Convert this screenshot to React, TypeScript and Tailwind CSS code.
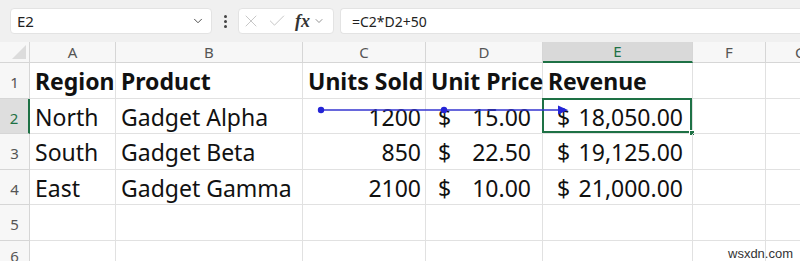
import React from "react";
import { X, Check, ChevronDown } from "lucide-react";

const FONT = { fontFamily: '"Noto Sans", "Liberation Sans", sans-serif' };

type Cell = { text?: string; bold?: boolean; align?: "left" | "right"; acct?: string };

const rows: Cell[][] = [
  [
    { text: "Region", bold: true },
    { text: "Product", bold: true },
    { text: "Units Sold", bold: true },
    { text: "Unit Price", bold: true },
    { text: "Revenue", bold: true },
    {},
    {},
  ],
  [
    { text: "North" },
    { text: "Gadget Alpha" },
    { text: "1200", align: "right" },
    { acct: "15.00" },
    { acct: "18,050.00" },
    {},
    {},
  ],
  [
    { text: "South" },
    { text: "Gadget Beta" },
    { text: "850", align: "right" },
    { acct: "22.50" },
    { acct: "19,125.00" },
    {},
    {},
  ],
  [
    { text: "East" },
    { text: "Gadget Gamma" },
    { text: "2100", align: "right" },
    { acct: "10.00" },
    { acct: "21,000.00" },
    {},
    {},
  ],
  [{}, {}, {}, {}, {}, {}, {}],
  [{}, {}, {}, {}, {}, {}, {}],
];

const cols = ["A", "B", "C", "D", "E", "F", "G"];

export default function App() {
  return (
    <div className="relative w-[800px] h-[261px] overflow-hidden bg-white text-[#111]" style={FONT}>
      {/* Formula bar */}
      <div className="h-[42px] bg-[#f0f0f0] flex items-center pl-[10px] gap-[6px]">
        <div className="w-[202px] h-[26px] bg-white rounded-[4px] border border-[#e3e3e3] flex items-center justify-between pl-[6px] pr-[6px]">
          <span className="text-[15px] text-[#222]">E2</span>
          <ChevronDown size={14} strokeWidth={1.6} className="text-[#444]" />
        </div>
        <div className="w-[14px] flex flex-col items-center gap-[2px]">
          <span className="w-[3px] h-[3px] rounded-full bg-[#444]" />
          <span className="w-[3px] h-[3px] rounded-full bg-[#444]" />
          <span className="w-[3px] h-[3px] rounded-full bg-[#444]" />
        </div>
        <div className="w-[96px] h-[26px] bg-white rounded-[4px] border border-[#e3e3e3] flex items-center pl-[2px]">
          <X size={20} strokeWidth={1} className="text-[#bcbcbc]" />
          <Check size={20} strokeWidth={1} className="text-[#bcbcbc] ml-[6px]" />
          <span
            className="ml-[8px] text-[18px] italic font-bold text-[#333] leading-none"
            style={{ fontFamily: '"Liberation Serif", serif' }}
          >
            fx
          </span>
          <ChevronDown size={12} strokeWidth={1.4} className="text-[#666] ml-[3px]" />
        </div>
        <div className="flex-1 h-[26px] bg-white rounded-l-[4px] border border-r-0 border-[#e3e3e3] flex items-center pl-[11px]">
          <span className="text-[14px] text-[#222]">=C2*D2+50</span>
        </div>
      </div>

      {/* Grid */}
      <div className="grid w-[836px] grid-cols-[30px_86px_187px_123px_117px_150px_73px_70px] grid-rows-[21px_36px_35px_36px_35px_36px_1fr] h-[219px]">
        {/* corner */}
        <div className="bg-[#f7f7f7] border-r border-b border-[#d6d6d6] flex items-end justify-end pr-[3px] pb-[3px]">
          <div className="w-0 h-0 border-l-[14px] border-l-transparent border-b-[14px] border-b-[#dcdcdc]" />
        </div>
        {cols.map((c) => (
          <div
            key={c}
            className={
              c === "E"
                ? "bg-[#d9d9d9] border-r border-[#d6d6d6] border-b-2 border-b-[#1e7145] flex items-center justify-center text-[15px] text-[#1e7145]"
                : "bg-[#f7f7f7] border-r border-b border-[#d6d6d6] flex items-center justify-center text-[15px] text-[#555]"
            }
          >
            {c}
          </div>
        ))}

        {rows.map((r, ri) => (
          <React.Fragment key={ri}>
            <div
              className={
                ri === 1
                  ? "bg-[#dedede] border-b border-[#d6d6d6] border-r-2 border-r-[#1e7145] flex items-center justify-center pt-[4px] text-[15px] text-[#1e7145]"
                  : "bg-[#f7f7f7] border-r border-b border-[#d6d6d6] flex items-center justify-center pt-[4px] text-[15px] text-[#555]"
              }
            >
              {ri + 1}
            </div>
            {r.map((cell, ci) => (
              <div
                key={ci}
                className={
                  "relative border-r border-b border-[#e1e1e1] flex items-center text-[23px] leading-none pt-[2px] " +
                  (cell.align === "right" ? "justify-end pr-[4px] " : "pl-[5px] ") +
                  (cell.bold ? "font-bold" : "")
                }
              >
                {cell.acct ? (
                  <div className={ci === 4 ? "flex-1 flex justify-between pl-[9px] pr-[9px]" : "flex-1 flex justify-between pl-[7px] pr-[11px]"}>
                    <span>$</span>
                    <span>{cell.acct}</span>
                  </div>
                ) : (
                  <span className="whitespace-nowrap">{cell.text}</span>
                )}
                {ri === 1 && ci === 4 && (
                  <>
                    <div className="absolute -top-[1px] -left-[1px] right-0 bottom-0 border-2 border-[#1e7145]" />
                    <div className="absolute -bottom-[3px] -right-[3px] w-[6px] h-[6px] bg-[#1e7145] border border-white" />
                  </>
                )}
              </div>
            ))}
          </React.Fragment>
        ))}
      </div>

      {/* Trace precedents arrow */}
      <svg className="absolute left-0 top-0 pointer-events-none" width="800" height="261">
        <line x1="321" y1="110" x2="560" y2="110" stroke="#3434d0" strokeWidth="1.5" />
        <circle cx="321" cy="110" r="3.2" fill="#2424d6" />
        <circle cx="444" cy="110" r="3.2" fill="#2424d6" />
        <polygon points="568,110 558,105.5 558,114.5" fill="#2424d6" />
      </svg>

      {/* watermark */}
      <div
        className="absolute left-[728px] top-[244px] text-[13px] text-[#333]"
        style={{ fontFamily: '"Liberation Sans", sans-serif' }}
      >
        wsxdn.com
      </div>
    </div>
  );
}
